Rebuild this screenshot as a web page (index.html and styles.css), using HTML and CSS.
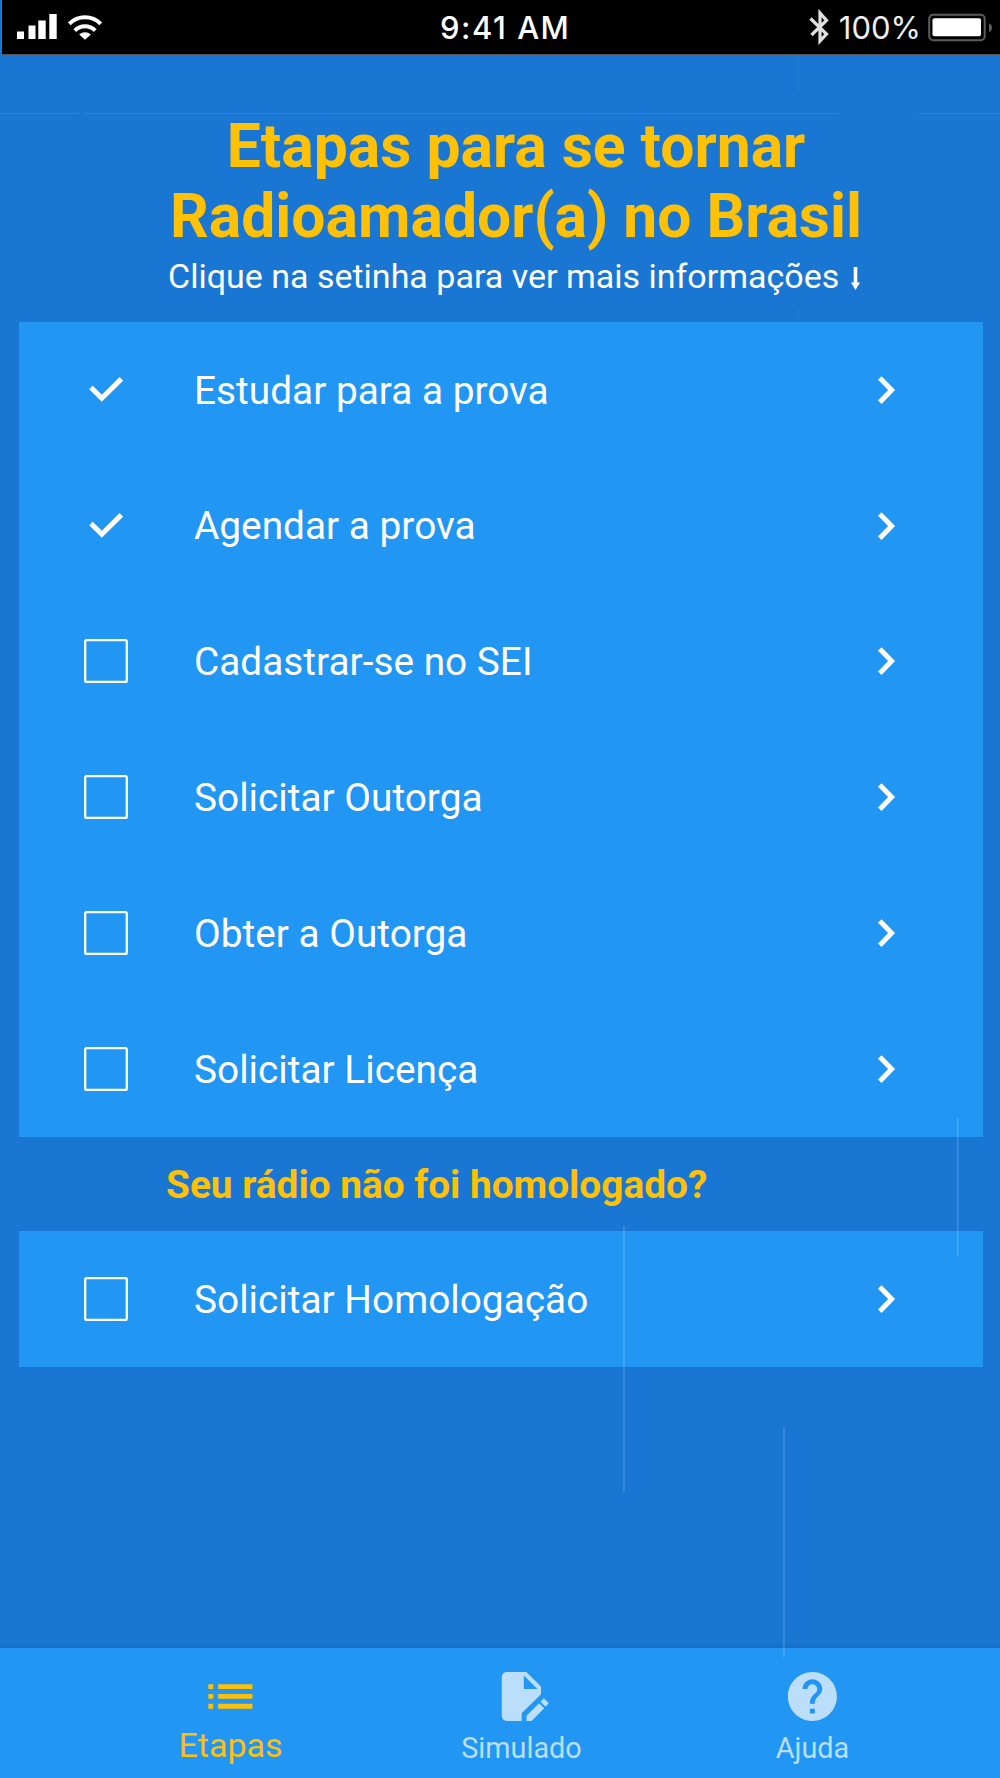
FILE: index.html
```html
<!DOCTYPE html>
<html lang="pt-BR">
<head>
  <meta charset="UTF-8" />
  <meta name="viewport" content="width=device-width, initial-scale=1.0" />
  <title>Etapas para se tornar Radioamador(a)</title>
  <link rel="stylesheet" href="styles.css">
</head>
<body>
  <!-- shared icons -->
  <svg width="0" height="0" class="defs">
    <symbol id="check" viewBox="0 0 44 44">
      <path d="M7 19.5 17.8 30.3 37.4 10.9" fill="none" stroke="#fff" stroke-width="5" />
    </symbol>
    <symbol id="box" viewBox="0 0 44 44">
      <rect x="1.2" y="1.2" width="41.6" height="41.6" rx="1.4" fill="none" stroke="#fff" stroke-width="2.3" />
    </symbol>
    <symbol id="chevron" viewBox="0 0 20 30">
      <path d="M2.8 3 14.6 15 2.8 27.2" fill="none" stroke="#fff" stroke-width="5" />
    </symbol>
  </svg>

  <div class="status-bar">
    <div class="status-left">
      <svg width="88" height="28" viewBox="0 0 88 28" fill="#fff">
        <path d="M0 18.5h7V26H0zM11.5 12.5h7V26h-7zM21.3 7.5h7.4V26h-7.4zM32.3 1h7.4v25h-7.4z" />
        <g fill="none" stroke="#fff" stroke-width="4">
          <path d="M52.3 10.8a22 22 0 0 1 31.4 0" />
          <path d="M57.8 17.6a14.3 14.3 0 0 1 20.4 0" />
        </g>
        <path d="M62.2 21.4a8.6 8.6 0 0 1 11.6 0L68 26.8z" />
      </svg>
    </div>
    <div class="status-time">9:41 AM</div>
    <div class="status-right">
      <svg width="22" height="36" viewBox="0 0 22 36">
        <path d="M1.5 9.5 17.5 25 11 32V4l6.500 7.500L2.500 26" fill="none" stroke="#e0e0e0" stroke-width="3.2" />
      </svg>
      <span class="battery-text">100%</span>
      <svg class="battery" width="66" height="30" viewBox="0 0 66 30">
        <rect x="1.2" y="1.7" width="55.5" height="25.6" rx="4" fill="none" stroke="#5c5c5c" stroke-width="2" />
        <rect x="4.5" y="5.3" width="48.5" height="18" rx="2" fill="#fff" />
        <path d="M61 10.5c4 1 4 7.5 0 8.500z" fill="#5c5c5c" />
      </svg>
    </div>
  </div>

  <main>
    <header>
      <h1>Etapas para se tornar<br>Radioamador(a) no Brasil</h1>
      <p class="hint">Clique na setinha para ver mais informações
        <svg class="arrow" width="9" height="23" viewBox="0 0 9 23" fill="#fff">
          <path d="M2.7 0h3.6v15.5H9L4.5 23 0 15.5h2.7z" />
        </svg>
      </p>
    </header>

    <ul class="steps">
      <li><svg class="mark"><use href="#check" /></svg><span>Estudar para a prova</span><svg class="chevron"><use href="#chevron" /></svg></li>
      <li><svg class="mark"><use href="#check" /></svg><span>Agendar a prova</span><svg class="chevron"><use href="#chevron" /></svg></li>
      <li><svg class="mark"><use href="#box" /></svg><span>Cadastrar-se no SEI</span><svg class="chevron"><use href="#chevron" /></svg></li>
      <li><svg class="mark"><use href="#box" /></svg><span>Solicitar Outorga</span><svg class="chevron"><use href="#chevron" /></svg></li>
      <li><svg class="mark"><use href="#box" /></svg><span>Obter a Outorga</span><svg class="chevron"><use href="#chevron" /></svg></li>
      <li><svg class="mark"><use href="#box" /></svg><span>Solicitar Licença</span><svg class="chevron"><use href="#chevron" /></svg></li>
    </ul>

    <h2>Seu rádio não foi homologado?</h2>

    <ul class="steps">
      <li><svg class="mark"><use href="#box" /></svg><span>Solicitar Homologação</span><svg class="chevron"><use href="#chevron" /></svg></li>
    </ul>
  </main>

  <nav class="tabs">
    <a class="tab active">
      <svg viewBox="0 0 24 24"><path d="M3 13h2v-2H3v2zm0 4h2v-2H3v2zm0-8h2V7H3v2zm4 4h14v-2H7v2zm0 4h14v-2H7v2zM7 7v2h14V7H7z" /></svg>
      <span>Etapas</span>
    </a>
    <a class="tab">
      <svg viewBox="0 0 24 24"><path d="M6 2C4.89 2 4 2.89 4 4v16a2 2 0 0 0 2 2h6.100v-3.080L20 11.100V8l-6-6H6m7 1.500L18.500 9H13V3.500m8.200 9.500c-.13 0-.27.05-.38.16l-1.020 1.020 2.050 2.050 1.020-1c.22-.22.22-.58 0-.79l-1.280-1.280c-.11-.11-.25-.16-.39-.16m-1.980 1.770-5.120 5.150V22h2.080l5.120-5.150z" /></svg>
      <span>Simulado</span>
    </a>
    <a class="tab">
      <svg viewBox="0 0 24 24"><path d="M12 2C6.48 2 2 6.48 2 12s4.480 10 10 10 10-4.480 10-10S17.520 2 12 2zm1 17h-2v-2h2v2zm2.070-7.750-.9.920C13.450 12.900 13 13.500 13 15h-2v-.5c0-1.100.45-2.100 1.170-2.830l1.240-1.260c.37-.36.59-.86.59-1.410 0-1.100-.9-2-2-2s-2 .9-2 2H8c0-2.210 1.790-4 4-4s4 1.790 4 4c0 .88-.36 1.680-.93 2.250z" /></svg>
      <span>Ajuda</span>
    </a>
  </nav>

  <!-- thin decorative lines over the page -->
  <svg class="lines" width="1000" height="1778" viewBox="0 0 1000 1778" fill="#fff">
    <path d="M0 113h79v1H0zM85 113h753v1H85zM918 113h82v1h-82z" opacity=".1" />
    <path d="M798 55h1v36h-1zM798 310h1v12h-1z" opacity=".05" />
    <path d="M957 1118h1.5v138.500H957zM623.2 1226h1.5v266h-1.5zM783.2 1427h1.5v230.500h-1.5z" opacity=".18" />
  </svg>
</body>
</html>
```
FILE: styles.css
```css
* {
  box-sizing: border-box;
}

body {
  margin: 0;
  width: 1000px;
  height: 1778px;
  display: flex;
  flex-direction: column;
  position: relative;
  overflow: hidden;
  font-family: Roboto, sans-serif;
  background: #1976d2;
  color: #fff;
}

.defs {
  display: none;
}

.status-bar {
  display: grid;
  grid-template-columns: 1fr auto 1fr;
  align-items: center;
  height: 54.5px;
  margin-left: 1.7px;
  padding: 0 6px 0 15.8px;
  background: #000;
  border-bottom: 1.5px solid #555;
  font-family: Inter, sans-serif;
  font-size: 31px;
  line-height: 38px;
}

.status-left svg,
.status-right svg {
  display: block;
}

.status-time {
  font-weight: 500;
  letter-spacing: 1.5px;
  margin: 3px 1px 0 0;
}

.status-right {
  display: flex;
  align-items: center;
  justify-content: flex-end;
}

.battery-text {
  margin: 3px 7px 0 8px;
  color: #eee;
}

.battery {
  margin-top: 2px;
}

main {
  flex: 1;
  padding: 57px 17px 0 19px;
}

header {
  height: 210.5px;
}

h1 {
  margin: 0;
  padding-left: 30px;
  font-size: 60.6px;
  font-weight: 700;
  line-height: 70.2px;
  text-align: center;
  color: #ffc107;
}

.hint {
  margin: 4px 0 0 149px;
  font-size: 34px;
  line-height: 40px;
  white-space: nowrap;
}

.arrow {
  margin-left: 3px;
  vertical-align: -2px;
}

.steps {
  list-style: none;
  margin: 0;
  padding: 0;
  background: #2196f3;
}

.steps li {
  display: flex;
  align-items: center;
  height: 135.8px;
  padding: 0 86px 0 65px;
  font-size: 38.8px;
  line-height: 46px;
}

.steps span {
  flex: 1;
  margin-left: 66px;
  padding-top: 1.6px;
}

.mark {
  width: 44px;
  height: 44px;
}

.chevron {
  width: 20px;
  height: 30px;
}

h2 {
  margin: 0;
  padding: 1px 0 0 147px;
  font-size: 38.8px;
  font-weight: 700;
  line-height: 93.4px;
  color: #ffc107;
}

.tabs {
  display: grid;
  grid-template-columns: repeat(3, 291px);
  height: 130px;
  padding: 19px 0 0 85px;
  background: #2196f3;
  box-shadow: 0 -1px 6px rgba(0, 0, 0, 0.12);
}

.tab {
  display: flex;
  flex-direction: column;
  align-items: center;
  font-size: 28.8px;
  line-height: 40px;
  color: #bbdefb;
}

.tab svg {
  width: 58.8px;
  height: 58.8px;
  fill: currentColor;
}

.tab span {
  margin-top: 2px;
}

.tab.active {
  font-size: 34px;
  color: #ffc107;
}

.tab.active span {
  margin-top: -1px;
}

.lines {
  position: absolute;
  top: 0;
  left: 0;
  pointer-events: none;
}
```
